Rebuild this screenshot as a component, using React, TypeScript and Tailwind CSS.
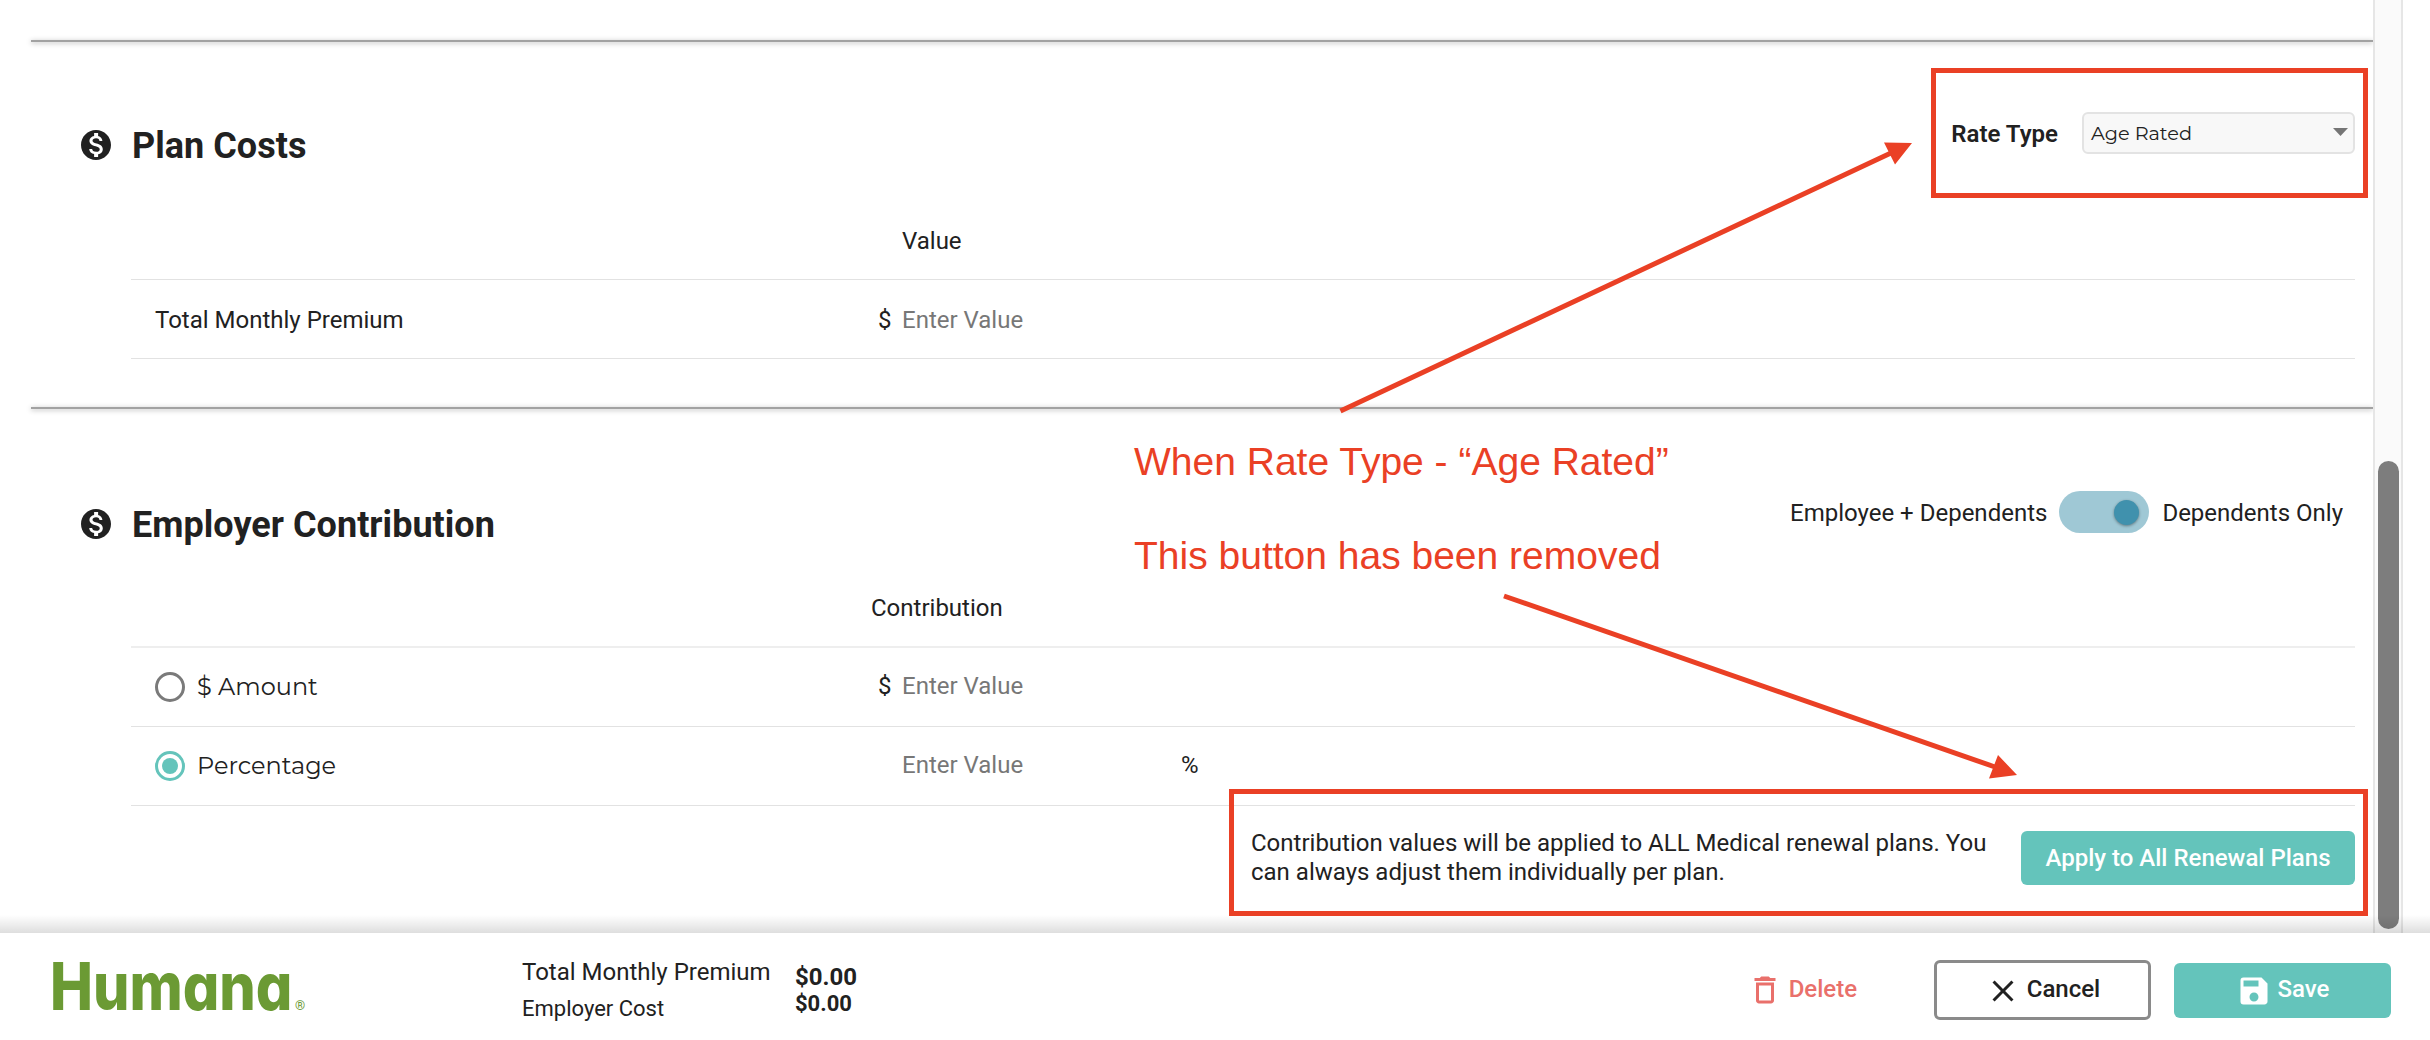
import type { ReactNode } from "react";
import {
  MdClose,
  MdDeleteOutline,
  MdMonetizationOn,
  MdSave,
} from "react-icons/md";

function Divider() {
  return <div className="relative h-0.5 shrink-0 bg-[#a2a2a2] shadow-[0_1px_5px_rgba(0,0,0,0.35)]" />;
}

function SectionTitle({ children }: { children: ReactNode }) {
  return (
    <div className="flex items-start gap-[18px] pl-[47px]">
      <MdMonetizationOn className="mt-[3px] size-9" />
      <h2 className="pt-px text-4xl leading-[42px] font-bold tracking-[0.03px]">{children}</h2>
    </div>
  );
}

function Radio({ checked, label }: { checked?: boolean; label: string }) {
  return (
    <label className="flex items-center gap-3">
      {checked ? (
        <span className="flex size-[30px] items-center justify-center rounded-full border-3 border-[#64c4bb]">
          <span className="size-4 rounded-full bg-[#64c4bb]" />
        </span>
      ) : (
        <span className="size-[30px] rounded-full border-3 border-[#7a7a7a]" />
      )}
      <span className="font-['Montserrat',sans-serif] text-2xl leading-7">{label}</span>
    </label>
  );
}

function ValueRow({
  label,
  prefix,
  suffix,
}: {
  label: ReactNode;
  prefix?: string;
  suffix?: string;
}) {
  return (
    <div className="flex h-[79px] items-center border-b border-[#e2e2e2] pl-6">
      <div className="w-[723px]">{label}</div>
      <div className="w-6 pb-0.5">{prefix}</div>
      <div className="w-[279px] pb-0.5 text-[#777]">Enter Value</div>
      <div className="pb-0.5">{suffix}</div>
    </div>
  );
}

function Annotations() {
  return (
    <div className="pointer-events-none absolute inset-0 font-['Liberation_Sans',sans-serif] text-[39px] leading-[44px] whitespace-nowrap text-[#ea4025]">
      <svg className="absolute inset-0" width="2430" height="1040" fill="none">
        <rect x="1933.5" y="70.5" width="432" height="125" stroke="#ea4025" strokeWidth="5" />
        <rect x="1231.5" y="791.5" width="1134" height="122" stroke="#ea4025" strokeWidth="5" />
        <path d="M1340.5 411 1892 152.500M1504 596 1995 767" stroke="#ea4025" strokeWidth="5" />
        <path d="M1884 142.500 1912 143 1895 164.500ZM1998 755 2017 775 1989 778.500Z" fill="#ea4025" />
      </svg>
      <p className="absolute top-[440px] left-[1134px]">When Rate Type - “Age Rated”</p>
      <p className="absolute top-[534px] left-[1134px]">This button has been removed</p>
    </div>
  );
}

export default function App() {
  return (
    <div className="relative flex h-[1040px] w-[2430px] flex-col overflow-hidden bg-white font-['Roboto',sans-serif] text-2xl leading-7 text-[#212121]">
      <main className="relative flex h-[933px] shrink-0">
        <div className="flex w-[2373px] flex-col pl-[31px]">
          <div className="h-10 shrink-0" />
          <Divider />

          {/* Plan costs */}
          <section className="h-[365px] shrink-0">
            <div className="flex h-[154px] items-start justify-between pt-[70px] pr-[18px]">
              <div className="pt-3">
                <SectionTitle>Plan Costs</SectionTitle>
              </div>
              <div className="flex items-center gap-6">
                <span className="pt-0.5 font-semibold">Rate Type</span>
                <div className="flex h-[42px] w-[273px] items-center justify-between rounded-md border-2 border-[#e3e3e3] bg-[#f8f8f8] pr-[5px] pl-[7px]">
                  <span className="font-['Montserrat',sans-serif] text-[19.300px]">
                    Age Rated
                  </span>
                  <svg width="15" height="8" viewBox="0 0 15 8" className="-mt-0.5">
                    <path d="M0 0h15L7.500 8Z" fill="#757575" />
                  </svg>
                </div>
              </div>
            </div>
            <div className="mr-[18px] ml-[100px]">
              <div className="flex h-[84px] items-start border-b border-[#e2e2e2] pt-[31px] pl-[771px]">
                Value
              </div>
              <div className="h-[79px] border-b border-[#e2e2e2] pt-[26px] pl-6">
                <div className="flex">
                  <div className="w-[723px]">Total Monthly Premium</div>
                  <div className="w-6">$</div>
                  <div className="text-[#777]">Enter Value</div>
                </div>
              </div>
            </div>
          </section>
          <Divider />

          {/* Employer contribution */}
          <section className="grow">
            <div className="flex h-[178px] items-start justify-between pt-[82px] pr-[30px]">
              <div className="pt-3">
                <SectionTitle>Employer Contribution</SectionTitle>
              </div>
              <div className="flex items-center">
                <span className="pt-0.5">Employee + Dependents</span>
                <span className="mr-[13px] ml-3 flex h-[42px] w-[90px] items-center justify-end rounded-full bg-[#9fc8d5] pr-[10px]">
                  <span className="size-[25px] rounded-full bg-[#4091ad] shadow-[0_1px_3px_rgba(0,0,0,0.4)]" />
                </span>
                <span className="pt-0.5">Dependents Only</span>
              </div>
            </div>
            <div className="mr-[18px] ml-[100px]">
              <div className="flex h-[61px] items-start border-b-2 border-[#eee] pt-[7px] pl-[740px]">
                Contribution
              </div>
              <ValueRow label={<Radio label="$ Amount" />} prefix="$" />
              <ValueRow label={<Radio checked label="Percentage" />} suffix="%" />
              <div className="flex items-center justify-end pt-[23px]">
                <p className="w-[770px] leading-[28.500px]">
                  Contribution values will be applied to ALL Medical renewal plans. You
                  <br />
                  can always adjust them individually per plan.
                </p>
                <button className="h-[54px] w-[334px] rounded-md bg-[#64c4bb] font-medium text-white">
                  Apply to All Renewal Plans
                </button>
              </div>
            </div>
          </section>
        </div>

        {/* Scrollbar */}
        <div className="relative flex w-[30px] justify-center border-x-2 border-[#e6e6e6] bg-[#fafafa] pt-[461px]">
          <div className="h-[468px] w-[21px] rounded-full bg-[#7d7d7d]" />
        </div>
        <div className="pointer-events-none absolute inset-x-0 bottom-0 h-[18px] bg-linear-to-t from-black/13 to-transparent" />
      </main>

      {/* Footer */}
      <footer className="flex grow items-start bg-white">
        <div className="flex w-[522px] items-baseline pt-[13px] pl-[50px] text-[#6b9a34]">
          <div className="w-[245px]">
            <span className="inline-block origin-left scale-x-[0.870] font-['Inter',sans-serif] text-[66px] leading-[80px] font-extrabold [font-feature-settings:'cv11']">
              Humana
            </span>
          </div>
          <span className="text-[13px] leading-4">®</span>
        </div>
        <div className="w-[273px] pt-[25px]">
          <div>Total Monthly Premium</div>
          <div className="pt-[9px] text-[22px]">Employer Cost</div>
        </div>
        <div className="pt-[30px] font-bold">
          <div>$0.00</div>
          <div className="text-[22px] leading-[26px]">$0.00</div>
        </div>
        <div className="ml-auto flex items-center pt-[27px] pr-[39px] font-medium">
          <button className="mr-[77px] flex items-center gap-1.5 text-[#e9706b]">
            <MdDeleteOutline className="size-9" />
            <span className="-mt-0.5">Delete</span>
          </button>
          <button className="mr-[23px] flex h-[60px] w-[217px] items-center justify-center gap-1.5 rounded-md border-3 border-[#8a8a8a]">
            <MdClose className="mt-0.5 size-9" />
            <span className="-mt-0.5">Cancel</span>
          </button>
          <button className="flex h-[55px] w-[217px] items-center justify-center gap-1.5 rounded-md bg-[#64c4bb] text-white">
            <MdSave className="mt-0.5 size-9" />
            <span className="-mt-0.5">Save</span>
          </button>
        </div>
      </footer>

      <Annotations />
    </div>
  );
}
